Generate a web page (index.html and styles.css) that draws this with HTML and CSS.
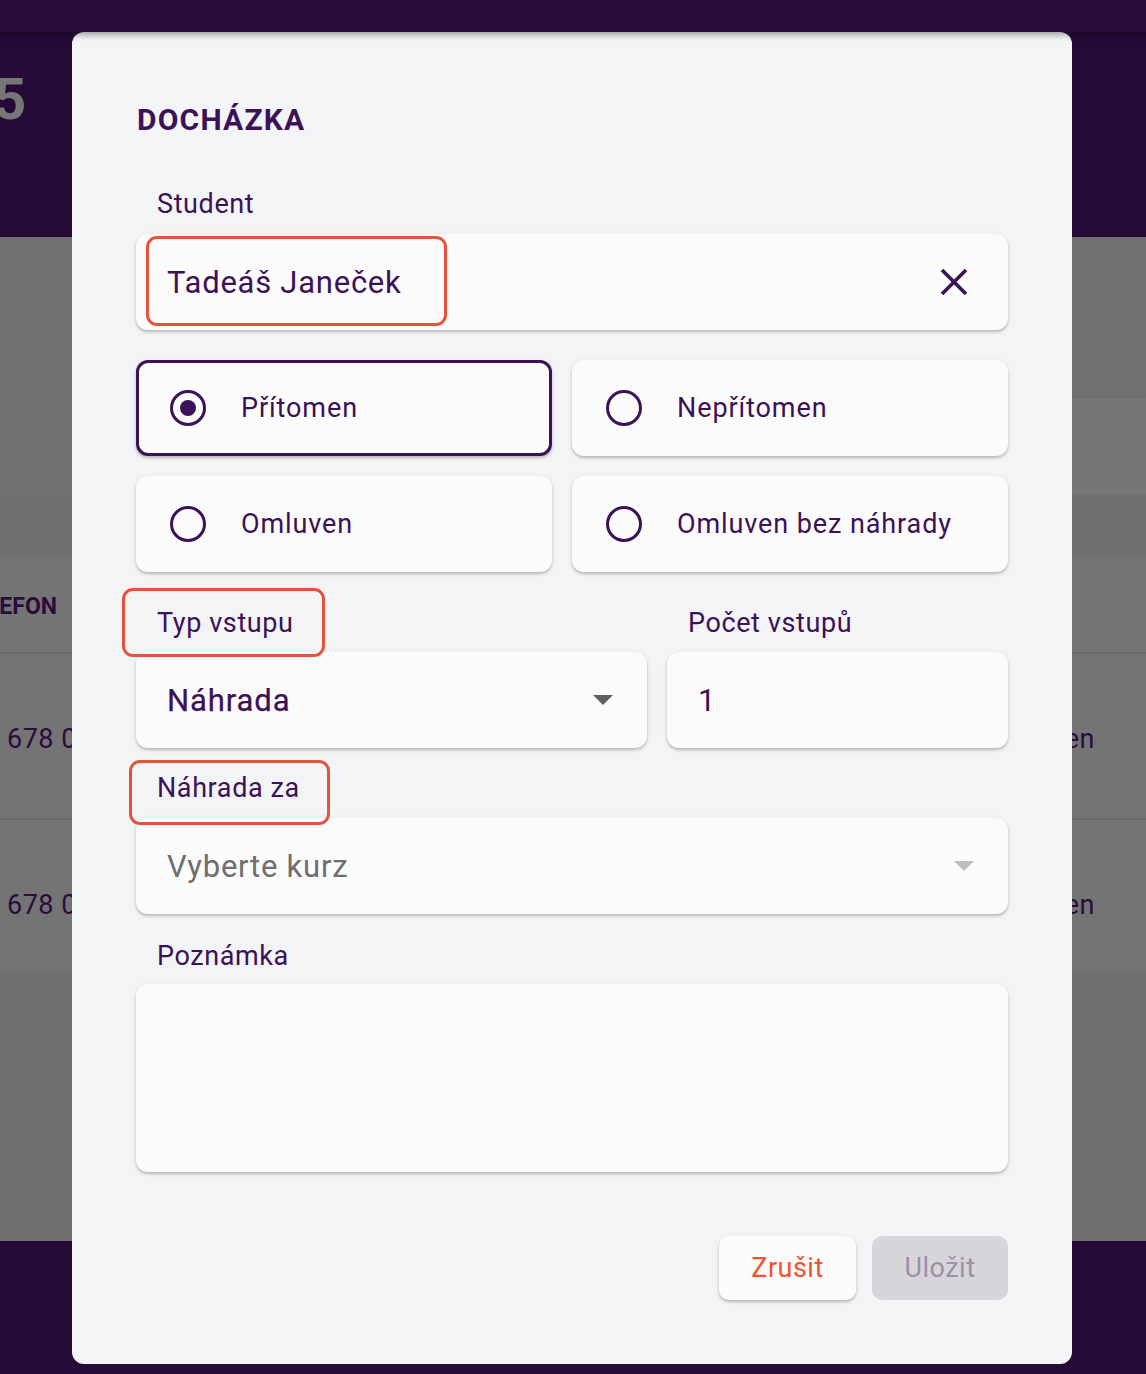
FILE: index.html
```html
<!DOCTYPE html>
<html lang="cs">
<head>
<meta charset="utf-8">
<title>Docházka</title>
<link rel="stylesheet" href="styles.css">
</head>
<body>
<div class="app">
  <div class="topbar"></div>
  <div class="hero"><span class="hero-num">5</span></div>
  <div class="band band-a"></div>
  <div class="toolbar"><div class="tool-card"></div></div>
  <div class="band band-b"></div>
  <div class="thead"><div class="th-phone"><span>TELEFON</span></div></div>
  <div class="trow trow-first"><span class="cell">678 012 345</span><span class="cell">Přítomen</span></div>
  <div class="trow trow-second"><span class="cell">678 012 346</span><span class="cell">Přítomen</span></div>
  <div class="rest"></div>
  <div class="footer"></div>
</div>

<div class="overlay">
  <div class="modal">
    <h2 class="title">DOCHÁZKA</h2>

    <div class="field">
      <label class="label label-mb14">Student</label>
      <div class="control control-student">
        <span class="value">Tadeáš Janeček</span>
        <svg class="clear" width="28" height="28" viewBox="0 0 28 28"><path d="M2 2 L26 26 M26 2 L2 26" stroke="#3b1157" stroke-width="3.6" stroke-linecap="butt" fill="none"/></svg>
        <span class="mark mark-student"></span>
      </div>
    </div>

    <div class="radios">
      <div class="radio selected"><span class="circle"><span class="dot"></span></span><span class="radio-text">Přítomen</span></div>
      <div class="radio"><span class="circle"></span><span class="radio-text">Nepřítomen</span></div>
      <div class="radio"><span class="circle"></span><span class="radio-text">Omluven</span></div>
      <div class="radio"><span class="circle"></span><span class="radio-text">Omluven bez náhrady</span></div>
    </div>

    <div class="pair">
      <div class="field">
        <label class="label label-mb13">Typ vstupu</label>
        <div class="control control-select">
          <span class="value value-strong">Náhrada</span>
          <span class="caret"></span>
        </div>
        <span class="mark mark-typ"></span>
      </div>
      <div class="field">
        <label class="label label-mb13">Počet vstupů</label>
        <div class="control">
          <span class="value">1</span>
        </div>
      </div>
    </div>

    <div class="field field-nahrada">
      <label class="label label-mb14">Náhrada za</label>
      <div class="control control-select">
        <span class="value placeholder">Vyberte kurz</span>
        <span class="caret caret-light"></span>
      </div>
      <span class="mark mark-za"></span>
    </div>

    <div class="field field-note">
      <label class="label label-mb12">Poznámka</label>
      <div class="control textarea"></div>
    </div>

    <div class="actions">
      <button class="btn btn-cancel">Zrušit</button>
      <button class="btn btn-save" disabled>Uložit</button>
    </div>
  </div>
</div>
</body>
</html>
```

FILE: styles.css
```css
html, body {
  margin: 0;
  padding: 0;
}
body {
  font-family: Roboto, "Noto Sans", "Liberation Sans", sans-serif;
  background: #717171;
}

/* ---------- background page ---------- */
.app {
  width: 1146px;
  height: 1374px;
  overflow: hidden;
  display: flex;
  flex-direction: column;
  background: #717171;
}
.topbar {
  height: 32px;
  flex: none;
  background: #280b3b;
  box-shadow: 0 3px 6px rgba(0, 0, 0, 0.35);
  position: relative;
  z-index: 1;
}
.hero {
  height: 205px;
  flex: none;
  box-sizing: border-box;
  padding-top: 38px;
  background: #250936;
}
.hero-num {
  display: block;
  margin-left: -7px;
  font-size: 58px;
  line-height: 58px;
  font-weight: 700;
  color: #767676;
}
.band {
  flex: none;
}
.band-a {
  height: 161px;
  background: #717171;
}
.toolbar {
  height: 96px;
  flex: none;
  background: #717171;
  display: flex;
}
.tool-card {
  margin-left: 400px;
  flex: 1;
  background: #767676;
  box-shadow: 0 3px 4px rgba(0, 0, 0, 0.25);
}
.band-b {
  height: 63px;
  background: #707070;
}
.thead {
  height: 97px;
  flex: none;
  box-sizing: border-box;
  background: #747474;
  border-bottom: 2px solid #6b6b6b;
  display: flex;
  align-items: center;
}
.th-phone {
  width: 57px;
  display: flex;
  justify-content: flex-end;
  white-space: nowrap;
  font-size: 23px;
  font-weight: 700;
  color: #2a0d3c;
  padding-top: 4px;
}
.trow {
  height: 166px;
  flex: none;
  box-sizing: border-box;
  background: #747474;
  display: flex;
  align-items: center;
  justify-content: space-between;
  padding: 6px 51px 0 7px;
  font-size: 27px;
  color: #2a0d3c;
  letter-spacing: 0.5px;
}
.trow-first {
  border-bottom: 2px solid #6b6b6b;
}
.trow-second {
  height: 150px;
  padding-bottom: 0;
  align-items: flex-start;
  padding-top: 69px;
}
.rest {
  height: 271px;
  flex: none;
  background: #707070;
}
.footer {
  flex: 1;
  background: #260a38;
}

/* ---------- modal ---------- */
.overlay {
  position: fixed;
  inset: 0;
  box-sizing: border-box;
  padding: 32px 0 0 72px;
}
.modal {
  width: 1000px;
  height: 1332px;
  box-sizing: border-box;
  padding: 70px 64px 64px;
  background: #f3f4f6;
  border-radius: 12px;
  display: flex;
  flex-direction: column;
  color: #3b1157;
}
.title {
  margin: 0 0 50px 1px;
  font-size: 30px;
  line-height: 36px;
  font-weight: 700;
  letter-spacing: 1.2px;
  color: #3b1157;
}
.field {
  position: relative;
  display: flex;
  flex-direction: column;
}
.label {
  display: block;
  font-size: 27px;
  line-height: 32px;
  padding-left: 21px;
  letter-spacing: 0.6px;
  color: #3b1157;
}
.label-mb12 { margin-bottom: 12px; }
.label-mb13 { margin-bottom: 13px; }
.label-mb14 { margin-bottom: 14px; }

.control {
  position: relative;
  height: 96px;
  box-sizing: border-box;
  background: #fcfbfc;
  border-radius: 12px;
  box-shadow: 0 2px 3px rgba(0, 0, 0, 0.22), 0 1px 6px rgba(0, 0, 0, 0.06);
  display: flex;
  align-items: center;
  padding: 0 34px 0 31px;
}
.control-student {
  padding-right: 40px;
}
.value {
  font-size: 31px;
  letter-spacing: 0.75px;
  color: #3b1157;
}
.value-strong {
  font-weight: 400;
  letter-spacing: 0.9px;
  -webkit-text-stroke: 0.25px #3b1157;
}
.placeholder {
  color: #6e6e6e;
}
.clear {
  margin-left: auto;
  display: block;
}
.caret {
  margin-left: auto;
  width: 0;
  height: 0;
  border-left: 10px solid transparent;
  border-right: 10px solid transparent;
  border-top: 10px solid #606060;
}
.caret-light {
  border-top-color: #bdbdbd;
}
.textarea {
  height: 188px;
}

/* annotation boxes */
.mark {
  position: absolute;
  box-sizing: border-box;
  border: 3px solid #e5533d;
  border-radius: 11px;
  pointer-events: none;
  z-index: 2;
}
.mark-student {
  left: 10px;
  top: 2px;
  width: 301px;
  height: 90px;
}
.mark-typ {
  left: -14px;
  top: -19px;
  width: 203px;
  height: 69px;
}
.mark-za {
  left: -7px;
  top: -12px;
  width: 201px;
  height: 65px;
}

/* radios */
.radios {
  margin-top: 30px;
  display: grid;
  grid-template-columns: 416px 436px;
  grid-auto-rows: 96px;
  gap: 20px;
}
.radio {
  box-sizing: border-box;
  border: 3px solid transparent;
  border-radius: 12px;
  background: #fcfbfc;
  box-shadow: 0 2px 3px rgba(0, 0, 0, 0.22), 0 1px 6px rgba(0, 0, 0, 0.06);
  display: flex;
  align-items: center;
  padding-left: 31px;
}
.radio.selected {
  border-color: #3b1157;
}
.circle {
  width: 36px;
  height: 36px;
  box-sizing: border-box;
  border: 3.5px solid #3b1157;
  border-radius: 50%;
  display: flex;
  align-items: center;
  justify-content: center;
  flex: none;
}
.dot {
  width: 16px;
  height: 16px;
  border-radius: 50%;
  background: #3b1157;
}
.radio-text {
  margin-left: 35px;
  font-size: 27px;
  letter-spacing: 0.9px;
  color: #3b1157;
}

/* pair row */
.pair {
  margin-top: 35px;
  display: grid;
  grid-template-columns: 511px 341px;
  gap: 20px;
}
.field-nahrada {
  margin-top: 24px;
}
.field-note {
  margin-top: 26px;
}

/* actions */
.actions {
  margin-top: 64px;
  display: flex;
  justify-content: flex-end;
  gap: 16px;
}
.btn {
  height: 64px;
  box-sizing: border-box;
  padding: 0 32px;
  border: none;
  border-radius: 10px;
  font-family: Roboto, "Noto Sans", sans-serif;
  font-size: 27px;
  letter-spacing: 0.5px;
}
.btn-cancel {
  width: 137px;
  background: #fcfbfc;
  color: #f5532f;
  box-shadow: 0 2px 3px rgba(0, 0, 0, 0.22), 0 1px 6px rgba(0, 0, 0, 0.06);
}
.btn-save {
  width: 136px;
  background: #d6d6da;
  color: #9c8fa6;
}
```
